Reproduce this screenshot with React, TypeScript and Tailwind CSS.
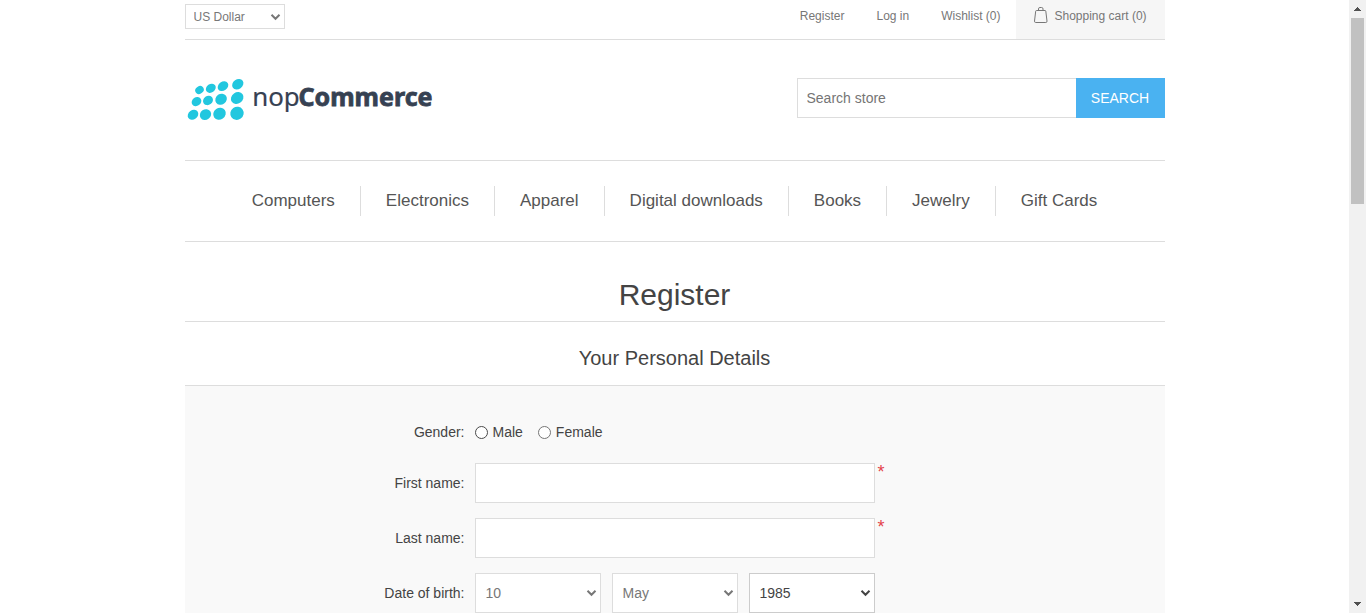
import React from "react";

const navItems = ["Computers", "Electronics", "Apparel", "Digital downloads", "Books", "Jewelry", "Gift Cards"];

const dots: [number, number, number, number][] = [
  [14.5, 20, 4.5, 3.7], [25.8, 18.3, 5.3, 4.2], [38, 16.2, 5.7, 4.4], [52.8, 14.2, 6, 4.8],
  [11.5, 31.6, 5.1, 4.3], [23, 30.4, 5.2, 4.5], [36.1, 29.2, 6, 5.3], [52.2, 28, 6.6, 5.6],
  [8, 44.8, 5.6, 4.6], [20.5, 44.6, 5.9, 5.2], [34.5, 43.8, 6.5, 5.8], [52, 43.3, 6.8, 6.5],
];

function Logo() {
  return (
    <svg width="260" height="60" viewBox="0 0 260 60" role="img" aria-label="nopCommerce">
      {dots.map(([x, y, rx, ry], i) => (
        <ellipse key={i} cx={x} cy={y} rx={rx} ry={ry} fill="#22c7df" transform={`rotate(-35 ${x} ${y})`} />
      ))}
      <text x="67.2" y="36.2" fontFamily="Noto Sans, sans-serif" fontSize="26" fill="#364152" stroke="#364152" strokeWidth="0.2" textLength="47.5" lengthAdjust="spacingAndGlyphs">nop</text>
      <text x="113.5" y="36.2" fontFamily="Noto Sans, sans-serif" fontWeight="700" fontSize="25.5" fill="#364152" stroke="#364152" strokeWidth="0.8" textLength="134" lengthAdjust="spacingAndGlyphs">Commerce</text>
    </svg>
  );
}

function Select({ value, label, className }: { value: string; label: string; className: string }) {
  return (
    <div className="grid">
      <select aria-label={label} className={`col-start-1 row-start-1 appearance-none border bg-white ${className}`}>
        <option>{value}</option>
      </select>
      <svg
        className={`pointer-events-none col-start-1 row-start-1 mr-[4px] self-center justify-self-end ${className.includes("#444") ? "text-[#444]" : "text-[#777]"}`}
        width="11" height="8" viewBox="0 0 11 8" fill="none" stroke="currentColor" strokeWidth="2"
      >
        <path d="M1.5 1.8L5.5 5.8L9.5 1.8" />
      </svg>
    </div>
  );
}

function TextRow({ label }: { label: string }) {
  return (
    <div className="mb-[15px] flex h-10">
      <label className="mr-[10px] w-[280px] text-right leading-10">{label}</label>
      <input className="h-10 w-[400px] border border-[#ddd] bg-white px-2 outline-none" aria-label={label} />
      <span className="-mt-px ml-[3px] text-[18px] leading-5 text-[#e4434b]">*</span>
    </div>
  );
}

function ScrollBar() {
  return (
    <div className="flex w-[17px] shrink-0 flex-col items-center bg-[#f1f1f1]">
      <svg width="17" height="18" shapeRendering="crispEdges">
        <path d="M8 7h1v1h1v1h1v1h1v1H5v-1h1V9h1V8h1z" fill="#505050" />
      </svg>
      <div className="h-[186px] w-[13px] bg-[#c1c1c1]" />
      <svg className="mt-auto" width="17" height="17" shapeRendering="crispEdges">
        <path d="M5 6h7v1h-1v1h-1v1H9v1H8V9H7V8H6V7H5z" fill="#505050" />
      </svg>
    </div>
  );
}

export default function App() {
  return (
    <div className="flex h-[613px] w-[1366px] overflow-hidden bg-white font-['Liberation_Sans',Arial,sans-serif] text-[14px] text-[#444]">
      <div className="flex-1 overflow-hidden">
        <div className="mx-auto w-[980px]">
          <header>
            <div className="flex h-10 justify-between border-b border-[#ddd] text-[12px] text-[#777]">
              <div className="mt-1 h-[25px]">
                <Select label="Currency" value="US Dollar" className="h-[25px] w-[100px] border-[#ddd] pl-2 text-[#777]" />
              </div>
              <div className="flex leading-8">
                <a className="mr-8">Register</a>
                <a className="mr-8">Log in</a>
                <a className="mr-[15px]">Wishlist (0)</a>
                <a className="flex h-[39px] w-[149px] bg-[#f6f6f6] pl-[18px]">
                  <svg className="mr-[7px] mt-[6px]" width="14" height="18" viewBox="0 0 14 18" fill="none" stroke="#777">
                    <path d="M2.5 4.5h8.5q.7 0 .8.7l1.2 9.9q.1 1.4-1.2 1.4H1.7q-1.3 0-1.2-1.4l1.2-9.9q.1-.7.8-.7zM4.5 4.3V2.9q0-1.4 1.4-1.4h1.7q1.4 0 1.4 1.4v1.4" />
                  </svg>
                  Shopping cart (0)
                </a>
              </div>
            </div>
            <div className="flex h-[121px] justify-between border-b border-[#ddd]">
              <a className="mt-[30px]"><Logo /></a>
              <form className="mt-[38px] flex h-10">
                <input className="w-[279px] border border-r-0 border-[#ddd] pl-[9px] pr-2 text-[14px] outline-none placeholder:text-[#757575]" placeholder="Search store" />
                <button type="button" className="w-[89px] bg-[#4ab2f1] text-[14px] text-white">SEARCH</button>
              </form>
            </div>
          </header>
          <nav className="flex h-[81px] items-center justify-center border-b border-[#ddd] text-[17px] text-[#555]">
            {navItems.map((item, i) => (
              <a key={item} className={i ? "h-[30px] border-l border-[#ddd] px-[25px] leading-[29px]" : "h-[30px] px-[25px] leading-[29px]"}>{item}</a>
            ))}
          </nav>
          <main>
            <h1 className="h-20 border-b border-[#ddd] pt-[27px] text-center text-[30px] leading-[52px]">Register</h1>
            <h2 className="h-[63px] pt-[21px] text-center text-[20px] leading-[30px]">Your Personal Details</h2>
            <div className="h-[420px] border-t border-[#ddd] bg-[#f9f9f9] pt-[26px]">
              <div className="mb-[11px] flex h-10 items-center">
                <span className="mr-[10px] w-[280px] text-right">Gender:</span>
                <label className="mr-[15px] flex items-center"><input type="radio" name="gender" className="mr-[5px] h-[13px] w-[13px] appearance-none rounded-full border border-[#4a4a4a] bg-white" />Male</label>
                <label className="flex items-center"><input type="radio" name="gender" className="mr-[5px] h-[13px] w-[13px] appearance-none rounded-full border border-[#767676] bg-white" />Female</label>
              </div>
              <TextRow label="First name:" />
              <TextRow label="Last name:" />
              <div className="flex h-10">
                <label className="mr-[10px] w-[280px] text-right leading-10">Date of birth:</label>
                <div className="flex gap-[11px]">
                  <Select label="Day" value="10" className="h-10 w-[126px] border-[#ddd] pl-[10px] text-[#777]" />
                  <Select label="Month" value="May" className="h-10 w-[126px] border-[#ddd] pl-[10px] text-[#777]" />
                  <Select label="Year" value="1985" className="h-10 w-[126px] border-[#ccc] pl-[10px] text-[#444]" />
                </div>
              </div>
            </div>
          </main>
        </div>
      </div>
      <ScrollBar />
    </div>
  );
}
